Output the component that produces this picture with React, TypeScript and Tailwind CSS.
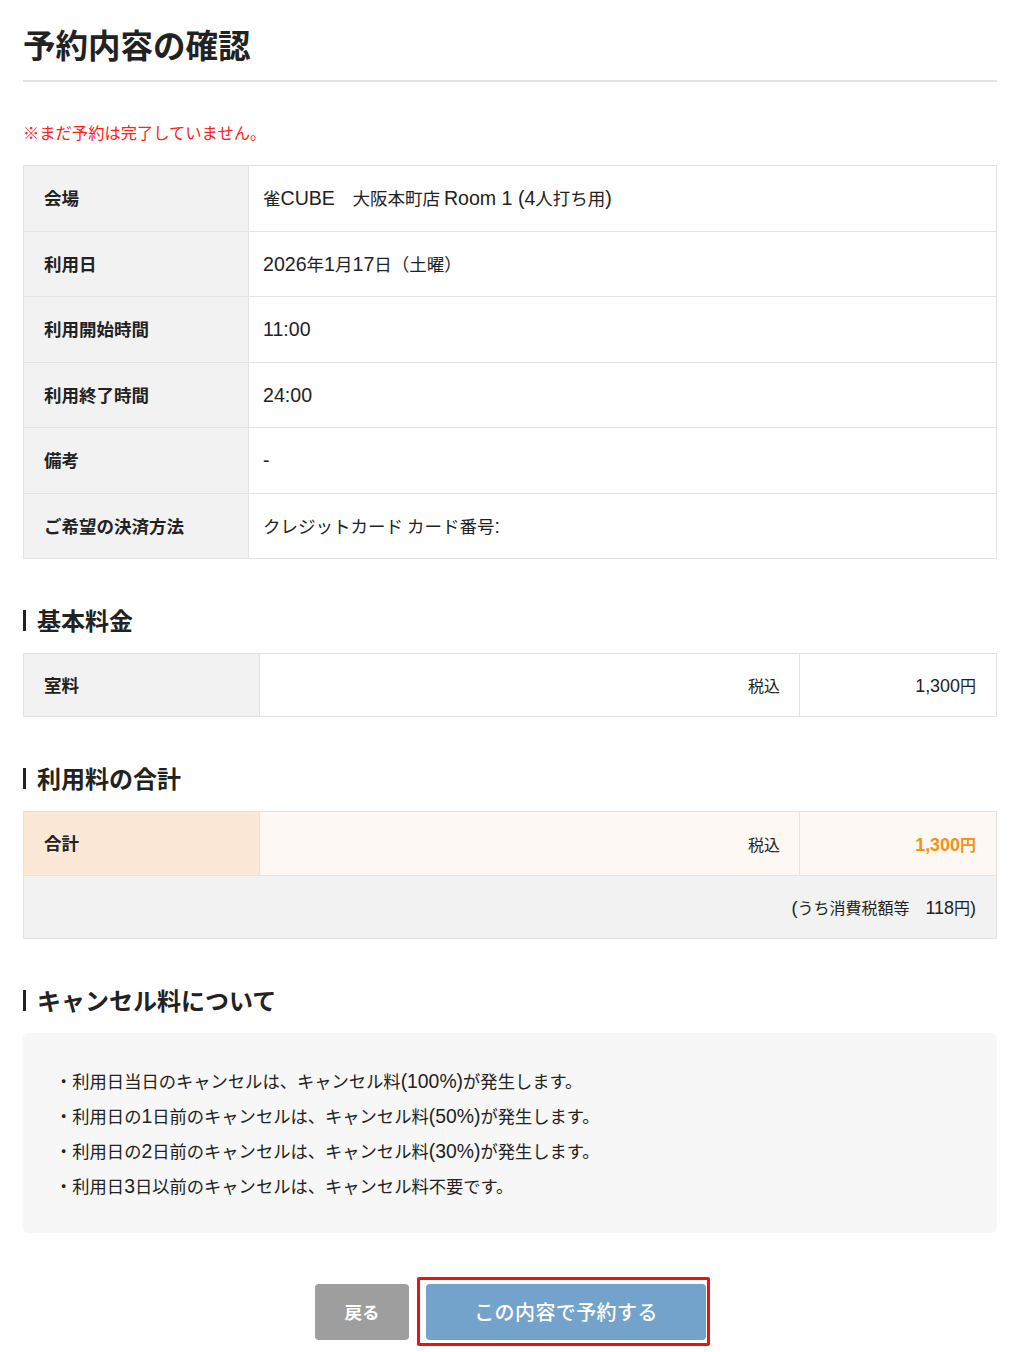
const font = { fontFamily: '"Noto Sans CJK JP", "Noto Sans", sans-serif' };

// Latin runs are drawn a bit larger in an Arial-like face, as in the original page
const Mixed = ({ text }: { text: string }) => {
  const parts = text.split(/([!-~]+(?: +[!-~]+)*)/);
  return (
    <>
      {parts.map((p, i) =>
        i % 2 === 1 ? (
          <span key={i} className="[font-family:'Liberation_Sans',Arial,sans-serif] text-[1.12em] leading-none">
            {p}
          </span>
        ) : (
          <span key={i}>{p}</span>
        ),
      )}
    </>
  );
};

const rows: [string, string][] = [
  ['会場', '雀CUBE\u3000大阪本町店 Room 1 (4人打ち用)'],
  ['利用日', '2026年1月17日（土曜）'],
  ['利用開始時間', '11:00'],
  ['利用終了時間', '24:00'],
  ['備考', '-'],
  ['ご希望の決済方法', 'クレジットカード カード番号:'],
];

const cancelNotes = [
  '・利用日当日のキャンセルは、キャンセル料(100%)が発生します。',
  '・利用日の1日前のキャンセルは、キャンセル料(50%)が発生します。',
  '・利用日の2日前のキャンセルは、キャンセル料(30%)が発生します。',
  '・利用日3日以前のキャンセルは、キャンセル料不要です。',
];

const SectionTitle = ({ label }: { label: string }) => (
  <h2 className="flex items-center text-[24px] font-bold leading-none text-[#222]">
    <span className="mr-[11px] inline-block h-[21px] w-[3px] bg-[#222]" />
    {label}
  </h2>
);

export default function App() {
  return (
    <div className="min-h-screen bg-white text-[#222]" style={font}>
      <div className="ml-[23px] w-[974px] pt-[22px] pb-[10px]">
        <h1 className="border-b-2 border-[#e3e3e3] pb-[14px] text-[32.5px] font-bold leading-[44px]">
          予約内容の確認
        </h1>

        <p className="mt-[38px] text-[16.3px] leading-[24px] text-[#ff2020]">※まだ予約は完了していません。</p>

        <table className="mt-[21px] w-full border-collapse border border-[#e3e3e3]">
          <tbody>
            {rows.map(([k, v]) => (
              <tr key={k} className="h-[65.5px] border-b border-[#e3e3e3]">
                <th className="w-[225px] border-r border-[#e3e3e3] bg-[#f2f2f2] pl-[20px] text-left text-[17.5px] font-bold">
                  {k}
                </th>
                <td className="pl-[14px] text-[17.5px]">
                  <Mixed text={v} />
                </td>
              </tr>
            ))}
          </tbody>
        </table>

        <div className="mt-[49px]">
          <SectionTitle label="基本料金" />
        </div>
        <table className="mt-[21px] w-full border-collapse border border-[#e3e3e3]">
          <tbody>
            <tr className="h-[63px]">
              <th className="w-[236px] border-r border-[#e3e3e3] bg-[#f2f2f2] pl-[20px] text-left text-[17.5px] font-bold">室料</th>
              <td className="border-r border-[#e3e3e3] pr-[19px] text-right text-[16px]">税込</td>
              <td className="w-[197px] pr-[20px] text-right text-[16px]">
                <Mixed text="1,300円" />
              </td>
            </tr>
          </tbody>
        </table>

        <div className="mt-[49px]">
          <SectionTitle label="利用料の合計" />
        </div>
        <table className="mt-[21px] w-full border-collapse border border-[#e3e3e3]">
          <tbody>
            <tr className="h-[64px] border-b border-[#e3e3e3] bg-[#fdf8f3]">
              <th className="w-[236px] border-r border-[#e3e3e3] bg-[#fbe8d7] pl-[20px] text-left text-[17.5px] font-bold">合計</th>
              <td className="border-r border-[#e3e3e3] pr-[19px] text-right text-[16px]">税込</td>
              <td className="w-[197px] pr-[20px] text-right text-[16px] font-bold text-[#f59216]">
                <Mixed text="1,300円" />
              </td>
            </tr>
            <tr className="h-[63px] bg-[#f2f2f2]">
              <td colSpan={3} className="pr-[20px] text-right text-[16px]">
                <Mixed text="(うち消費税額等　118円)" />
              </td>
            </tr>
          </tbody>
        </table>

        <div className="mt-[49px]">
          <SectionTitle label="キャンセル料について" />
        </div>
        <div className="mt-[21px] rounded-[6px] bg-[#f7f7f7] px-[32px] py-[30px]">
          {cancelNotes.map((n) => (
            <p key={n} className="text-[17.3px] leading-[35px]">
              <Mixed text={n} />
            </p>
          ))}
        </div>

        <div className="mt-[44px] flex justify-center gap-[8px] pl-[5px]">
          <button className="mt-[7px] h-[56px] w-[94px] rounded-[4px] bg-[#9e9e9e] text-[17.5px] font-bold text-white">
            戻る
          </button>
          <div className="rounded-[2px] border-[3px] border-[#ee1111] pt-[4px] pb-[3px] pl-[6px] pr-[1px]">
            <button className="h-[56px] w-[280px] rounded-[4px] bg-[#73a3cb] text-[20px] font-medium tracking-[0.02em] text-white">
              この内容で予約する
            </button>
          </div>
        </div>
      </div>
    </div>
  );
}
